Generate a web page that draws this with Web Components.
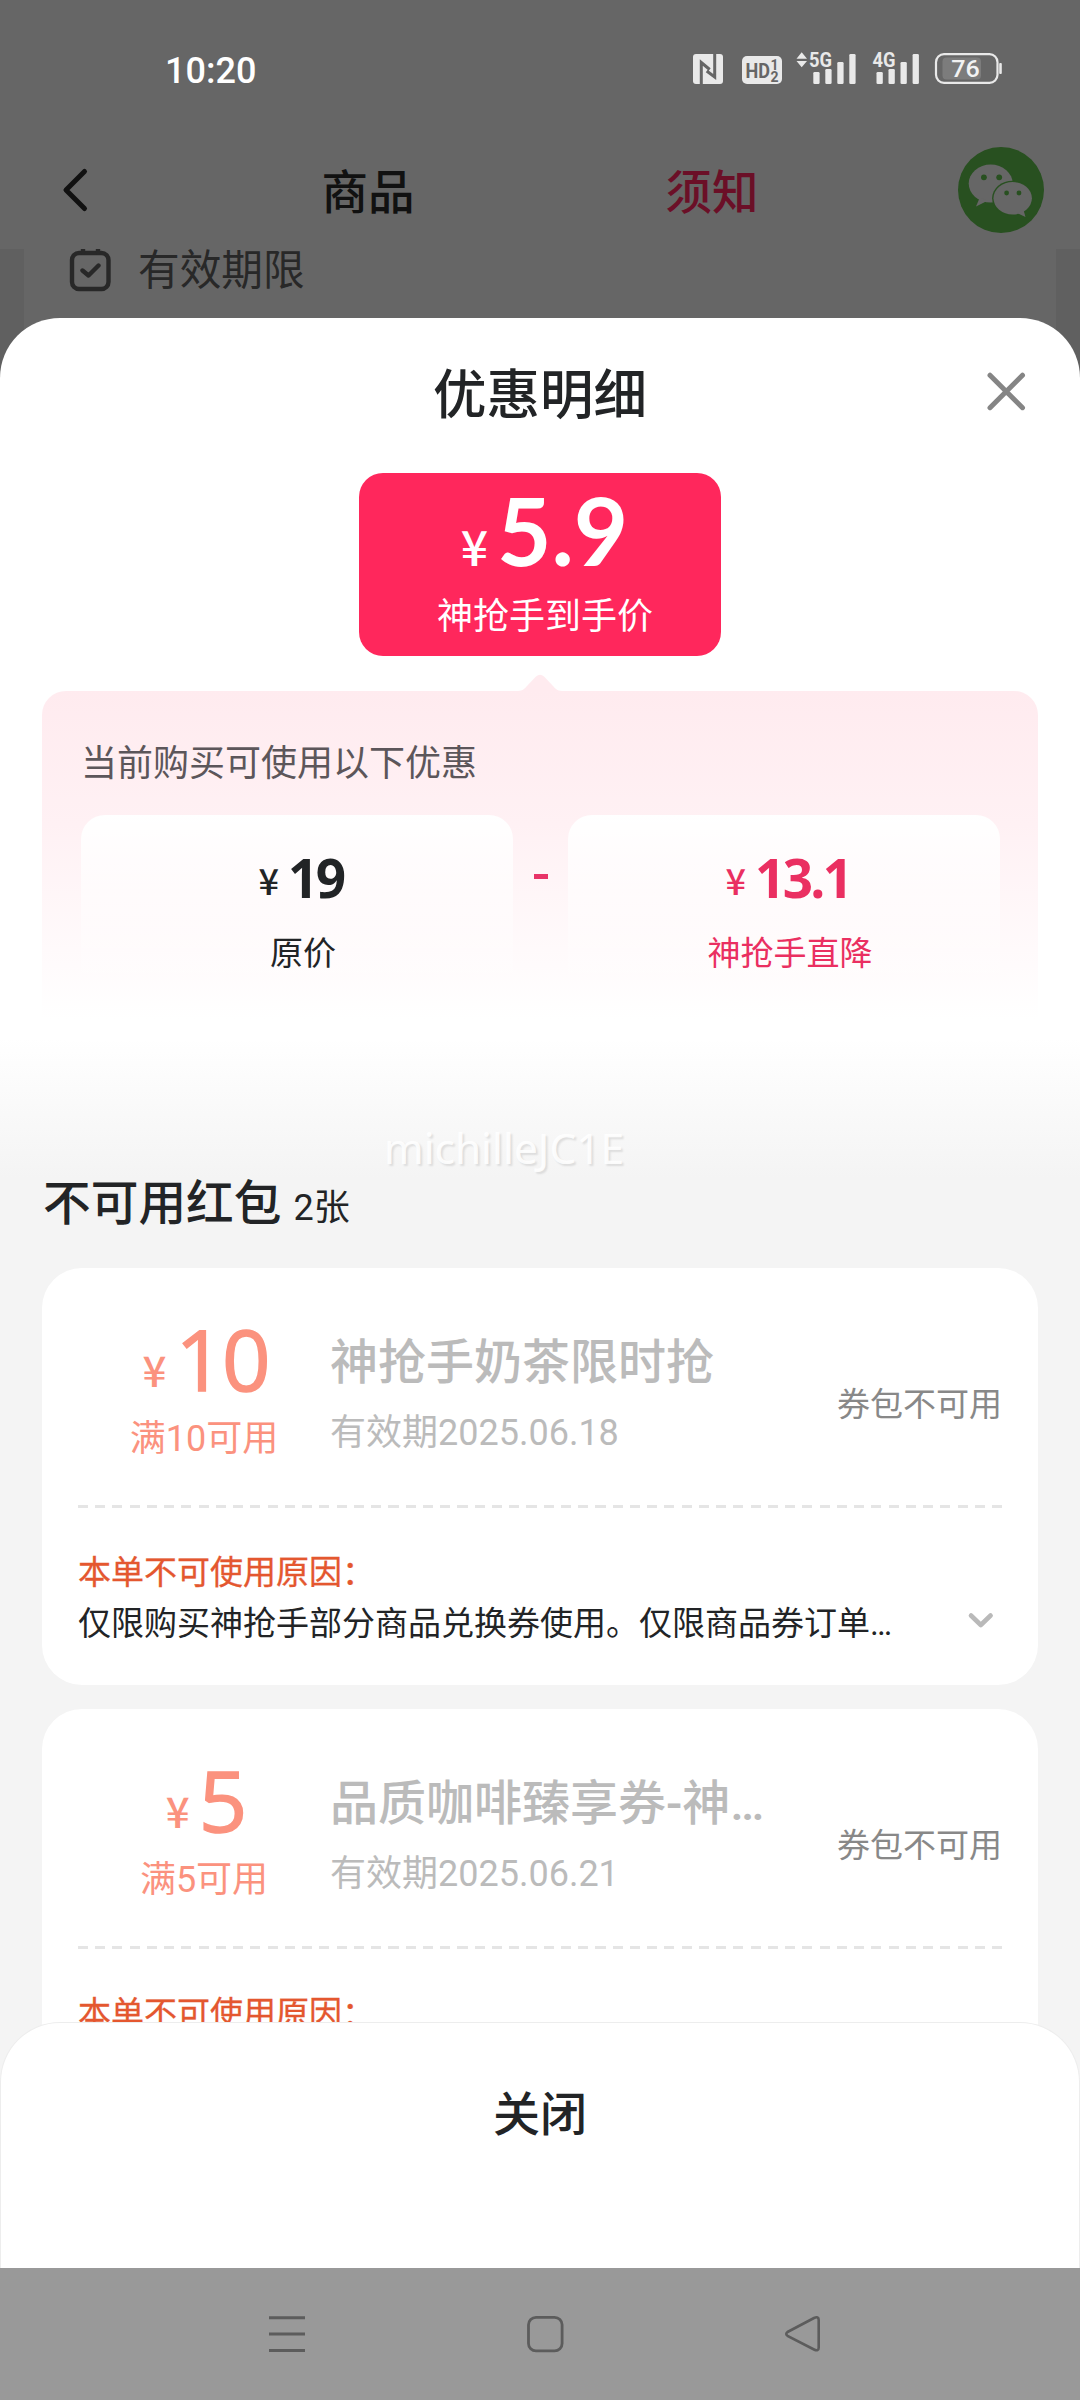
<!DOCTYPE html>
<html lang="zh-CN">
<head>
<meta charset="utf-8">
<title>优惠明细</title>
<style>
  body { margin: 0; width: 1080px; height: 2400px; overflow: hidden; background: #666;
    font-family: Roboto, "Noto Sans CJK SC", sans-serif; color: #222426; }
</style>
</head>
<body>
<discount-page></discount-page>

<script>
const define = (name, html) => {
  const t = document.createElement('template');
  t.innerHTML = html;
  customElements.define(name, class extends HTMLElement {
    constructor() {
      super();
      this.attachShadow({ mode: 'open' }).appendChild(t.content.cloneNode(true));
    }
  });
};

define('status-bar', `
<style>
  :host { display: flex; justify-content: space-between; height: 138px; color: #fff; }
  time { margin: 51px 0 0 165px; font: 500 36px/40px Roboto, sans-serif; }
  svg { display: block; margin: 45px 70px 0 0; }
  text { font-family: Roboto, sans-serif; }
</style>
<time>10:20</time>
<svg width="320" height="46" viewBox="690 45 320 46" fill="#e9e9e9">
  <rect x="693" y="54" width="30" height="30" rx="3"/>
  <path d="M701.3 84V62.500L709.7 69.500M714.700 54V77L706.700 71" fill="none" stroke="#666" stroke-width="3"/>
  <rect x="742" y="56" width="40" height="28" rx="5"/>
  <g fill="#666">
    <text x="745.5" y="77.5" font-size="21" font-weight="700" textLength="24.500" lengthAdjust="spacingAndGlyphs">HD</text>
    <text x="770.500" y="69.800" font-size="14" font-weight="700">1</text>
    <text x="770.500" y="81.500" font-size="14" font-weight="700">2</text>
  </g>
  <path d="M796.5 58.7L801.7 52.3L807 58.7ZM796.5 61L801.7 67.3L807 61Z"/>
  <text x="809" y="67" font-size="20.5" font-weight="700" textLength="23" lengthAdjust="spacingAndGlyphs">5G</text>
  <rect x="813.3" y="72" width="6.3" height="12" rx="1.3"/><rect x="825.3" y="69" width="6.3" height="15" rx="1.3"/>
  <rect x="837.3" y="62" width="6.3" height="22" rx="1.3"/><rect x="849.3" y="54" width="6.3" height="30" rx="1.3"/>
  <text x="872.5" y="67" font-size="20.5" font-weight="700" textLength="23" lengthAdjust="spacingAndGlyphs">4G</text>
  <rect x="876.5" y="72" width="6.3" height="12" rx="1.3"/><rect x="888.5" y="69" width="6.3" height="15" rx="1.3"/>
  <rect x="900.5" y="62" width="6.3" height="22" rx="1.3"/><rect x="912.6" y="54" width="6.3" height="30" rx="1.3"/>
  <rect x="942.5" y="57.5" width="38.5" height="22" rx="4" fill="#7c7c7c"/>
  <rect x="936" y="54.2" width="61.5" height="28.6" rx="8" fill="none" stroke="#e9e9e9" stroke-width="2.2"/>
  <rect x="999.2" y="63" width="2.6" height="11" rx="1"/>
  <text x="951.3" y="77" font-size="24" font-weight="500" textLength="28.5" lengthAdjust="spacingAndGlyphs" fill="#f2f2f2">76</text>
</svg>`);

define('page-header', `
<style>
  :host { display: grid; box-sizing: border-box; grid-template-columns: 196px 344px 344px 1fr; height: 111px; padding-bottom: 7px; align-items: center; color: #111; }
  .back { margin-left: 60px; display: block; }
  span { text-align: center; font-size: 46.5px; line-height: 56px; font-weight: 500; padding-top: 6px; }
  .on { color: #6b0f27; }
  .wx { margin-left: 72px; display: block; }
</style>
<svg class="back" width="30" height="46" viewBox="60 168 30 46" fill="none" stroke="#111" stroke-width="5" stroke-linecap="round" stroke-linejoin="round"><path d="M84.5 172.5L66 191L84.5 209.5"/></svg>
<span>商品</span><span class="on">须知</span>
<svg class="wx" width="90" height="90" viewBox="956 145 90 90">
  <circle cx="1001" cy="190" r="43" fill="#285020"/>
  <g fill="#666"><ellipse cx="990.7" cy="183.6" rx="22" ry="19"/><path d="M980 197L976 206.5L987 201Z"/></g>
  <ellipse cx="1012.7" cy="198.3" rx="20.6" ry="17.6" fill="#285020"/>
  <g fill="#666"><ellipse cx="1012.7" cy="198.3" rx="19.2" ry="16.3"/><path d="M1017 213L1025.5 217L1023.5 210Z"/></g>
  <g fill="#285020"><circle cx="983.9" cy="177.3" r="2.9"/><circle cx="999.2" cy="177.3" r="2.9"/><circle cx="1006.6" cy="193" r="2.4"/><circle cx="1019" cy="193" r="2.4"/></g>
</svg>`);

define('validity-row', `
<style>
  :host { display: flex; height: 129px; padding: 0 24px; background: #606060; }
  div { flex: 1; display: flex; background: #666; align-items: flex-start; color: #282828; }
  svg { margin: 0 0 0 44px; display: block; }
  span { margin: 0 0 0 26px; font-size: 41.7px; line-height: 44px; }
</style>
<div>
<svg width="44" height="44" viewBox="68 249 44 44" fill="none" stroke="#282828" stroke-width="4.4" stroke-linecap="round" stroke-linejoin="round">
  <rect x="72" y="253" width="36.5" height="36" rx="7"/><path d="M82.5 270.5L88.5 275.5L98.5 265.5M83 248.5v4M98 248.5v4"/>
</svg>
<span>有效期限</span></div>`);

define('yuan-price', `
<style>
  :host { display: flex; justify-content: center; align-items: baseline; white-space: nowrap; }
  i { font-style: normal; font-family: "Noto Sans CJK SC", sans-serif; font-weight: 500; letter-spacing: 0;
      font-size: var(--yen, 36px); line-height: 1; margin-right: var(--gap, 10px); position: relative; top: var(--lift, 0); }
</style>
<i>¥</i><slot></slot>`);

define('final-price', `
<style>
  :host { display: block; flex: none; box-sizing: border-box; width: 362px; height: 183px; padding-top: 7px; border-radius: 24px;
    background: #ff275c; color: #fff; text-align: center; }
  yuan-price { --yen: 48px; --gap: 9px; font: 700 94px/100px Lato, sans-serif; height: 100px; padding-left: 9px; }
  p { margin: 17px 0 0; padding-left: 10px; font-size: 36px; line-height: 40px; }
</style>
<yuan-price>5.9</yuan-price>
<p><slot></slot></p>`);

define('price-part', `
<style>
  :host { display: block; box-sizing: border-box; width: 432px; height: 190px; padding: 33px 0 0 12px; border-radius: 24px;
    background: linear-gradient(#fff, rgba(255,255,255,0)); text-align: center; }
  .num { --yen: 36px; --gap: 9px; --lift: -3px; font: 700 53px/60px "Open Sans", sans-serif; height: 60px; letter-spacing: -2.6px; margin-left: -4px; }
  p { margin: 26px 0 0; font-size: 33px; line-height: 40px; }
</style>
<yuan-price class="num"><slot name="price"></slot></yuan-price>
<p><slot></slot></p>`);

define('discount-panel', `
<style>
  :host { display: flex; flex: none; flex-direction: column; align-items: center; width: 996px; }
  .tip { display: block; }
  .box { box-sizing: border-box; width: 996px; height: 350px; padding: 53px 38px 0 39px; border-radius: 24px;
    background: linear-gradient(#ffebef, #fff1f4 38%, #fff 94%); }
  p { margin: 0 0 31px; font-size: 36px; line-height: 40px; color: #5c565a; }
  .row { display: flex; justify-content: space-between; }
  .minus { width: 14px; height: 5px; background: #e83468; margin-top: 59px; }
  .red { color: #ea2f61; }
</style>
<svg class="tip" width="44" height="18" viewBox="0 0 44 18"><path d="M0 18C5 18 7 15 9 13L18 3.5Q22 0 26 3.5L35 13C37 15 39 18 44 18Z" fill="#ffebef"/></svg>
<div class="box">
  <p>当前购买可使用以下优惠</p>
  <div class="row">
    <price-part><span slot="price">19</span>原价</price-part>
    <div class="minus"></div>
    <price-part class="red"><span slot="price">13.1</span>神抢手直降</price-part>
  </div>
</div>`);

define('coupon-card', `
<style>
  :host { display: block; flex: none; box-sizing: border-box; width: 996px; height: 417px; background: #fff; border-radius: 40px; padding: 0 36px; }
  .top { display: flex; height: 237px; }
  .value { width: 252px; padding-top: 40px; color: #fb927e; text-align: center; box-sizing: border-box; }
  .value yuan-price { --yen: 42px; --gap: 9px; --lift: -4px; font: 500 85px/100px "Open Sans", sans-serif; height: 100px; letter-spacing: -2px; padding-left: 3px; }
  .value yuan-price span, ::slotted([slot=amount]) { -webkit-text-stroke: 1.5px #fb927e; }
  .limit { font-size: 36px; line-height: 40px; margin-top: 11px; }
  .info { flex: 1; padding-top: 67px; color: #bbb; }
  .title { font-size: 48px; line-height: 56px; font-weight: 500; }
  .date { font-size: 36px; line-height: 40px; margin-top: 22px; }
  .state { padding: 117px 0 0 0; font-size: 33px; line-height: 40px; color: #888; }
  .cut { height: 3px; background: repeating-linear-gradient(90deg, #e5e5e5 0 10px, transparent 10px 17.25px); }
  .bottom { display: flex; justify-content: space-between; align-items: flex-end; padding-top: 40px; }
  .why { font-size: 33px; line-height: 50px; color: #e4572f; -webkit-text-stroke: .3px #e4572f; }
  .text { font-size: 33px; line-height: 51px; min-height: 51px; }
  svg { display: block; margin: 0 7px 18px 0; }
</style>
<div class="top">
  <div class="value"><yuan-price><slot name="amount"></slot></yuan-price><div class="limit"><slot name="limit"></slot></div></div>
  <div class="info"><div class="title"><slot name="title"></slot></div><div class="date"><slot name="date"></slot></div></div>
  <div class="state">券包不可用</div>
</div>
<div class="cut"></div>
<div class="bottom">
  <div><div class="why">本单不可使用原因：</div><div class="text"><slot name="reason"></slot></div></div>
  <svg width="28" height="22" viewBox="967 1609 28 22" fill="none" stroke="#b9b9b9" stroke-width="4.6" stroke-linecap="round" stroke-linejoin="round"><path d="M971 1615.5L980.8 1625L990.6 1615.5"/></svg>
</div>`);

define('sheet-head', `
<style>
  :host { display: grid; flex: none; grid-template-columns: 1fr auto 1fr; height: 155px; align-items: start; }
  h1 { margin: 48px 0 0; font-size: 53.5px; line-height: 60px; font-weight: 500; }
  svg { display: block; justify-self: end; margin: 51px 52px 0 0; }
</style>
<span></span><h1><slot></slot></h1>
<svg width="44" height="44" viewBox="984 369 44 44" fill="none" stroke="#858585" stroke-width="5" stroke-linecap="round"><path d="M990 375.2L1022.5 407.7M1022.5 375.2L990 407.7"/></svg>`);

define('coupon-list', `
<style>
  :host { display: flex; flex: none; flex-direction: column; gap: 24px; padding: 0 42px; }
  header { display: flex; flex: none; align-items: baseline; height: 93px; margin: -1px 0 -24px 1px; line-height: 58px; }
  h2 { margin: 0; font-size: 47.7px; font-weight: 500; }
  small { font-size: 36px; margin-left: 12px; }
</style>
<header><h2>不可用红包</h2><small>2张</small></header>
<slot></slot>`);

define('sheet-footer', `
<style>
  :host { display: block; box-sizing: border-box; height: 246px; margin-top: -60px; padding-top: 64px; position: relative; background: #fff;
    border: 1px solid #ededed; border-bottom: 0; border-radius: 60px 60px 0 0; text-align: center; font-size: 47px; line-height: 56px; font-weight: 500; }
</style><slot></slot>`);

define('nav-bar', `
<style>
  :host { display: flex; height: 132px; background: #999; padding: 46px 0 0 267px; gap: 218px; box-sizing: border-box; }
  svg { display: block; }
</style>
<svg width="40" height="40" viewBox="267 2314 40 40" stroke="#5c5c5c" stroke-width="3"><path d="M269 2317.7h36M269 2334h36M269 2350.5h36"/></svg>
<svg width="40" height="40" viewBox="525 2314 40 40" fill="none" stroke="#5c5c5c" stroke-width="2.8"><rect x="528.5" y="2317.3" width="33.6" height="33.6" rx="7.5"/></svg>
<svg width="40" height="40" viewBox="783 2314 40 40" fill="none" stroke="#5c5c5c" stroke-width="2.6"><path d="M787.5 2332L814 2318Q818.7 2316 818.7 2320V2347.5Q818.7 2351.800 814 2349.500L787.5 2335.800Q785 2334 787.5 2332Z"/></svg>`);

define('discount-page', `
<style>
  :host { display: flex; flex-direction: column; height: 2400px; }
  .sheet { margin-top: -60px; border-radius: 60px 60px 0 0; position: relative;
    background: linear-gradient(#fff 720px, #f4f4f4 860px); }
  .scroll { height: 1764px; overflow: hidden; display: flex; flex-direction: column; }
  .hero { display: flex; flex: none; flex-direction: column; align-items: center; gap: 17px; height: 703px; }
  .mark { position: absolute; left: 384px; top: 801px; font: 42.4px/58px "Noto Sans", sans-serif; color: rgba(255,255,255,.9);
    text-shadow: 2px 2px 2px rgba(0,0,0,.1); white-space: nowrap; }
</style>
<status-bar></status-bar>
<page-header></page-header>
<validity-row></validity-row>
<div class="sheet">
  <div class="scroll">
    <sheet-head>优惠明细</sheet-head>
    <div class="hero">
      <final-price>神抢手到手价</final-price>
      <discount-panel></discount-panel>
    </div>
    <coupon-list>
      <coupon-card><span slot="amount">10</span><span slot="limit">满10可用</span><span slot="title">神抢手奶茶限时抢</span><span slot="date">有效期2025.06.18</span><span slot="reason">仅限购买神抢手部分商品兑换券使用。仅限商品券订单…</span></coupon-card>
      <coupon-card><span slot="amount">5</span><span slot="limit">满5可用</span><span slot="title">品质咖啡臻享券-神…</span><span slot="date">有效期2025.06.21</span></coupon-card>
    </coupon-list>
  </div>
  <div class="mark">michilleJC1E</div>
</div>
<sheet-footer>关闭</sheet-footer>
<nav-bar></nav-bar>`);
</script>
</body>
</html>
